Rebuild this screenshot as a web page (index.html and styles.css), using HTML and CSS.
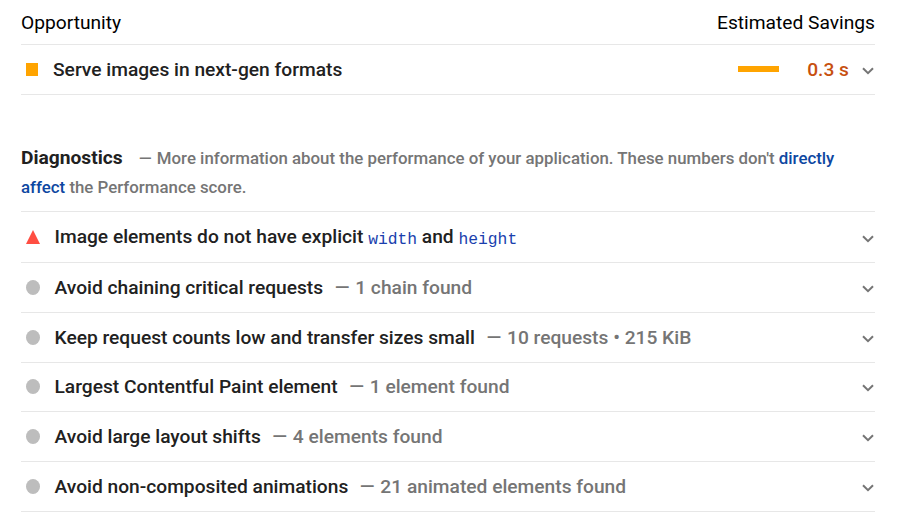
FILE: index.html
```html
<!DOCTYPE html>
<html lang="en">
<head>
<meta charset="utf-8">
<title>Performance audits</title>
<link rel="stylesheet" href="styles.css">
</head>
<body>
<main class="report">
  <header class="columns"><span>Opportunity</span><span>Estimated Savings</span></header>
  <div class="audit opportunity">
    <span class="icon"><i class="square"></i></span>
    <span class="title">Serve images in next-gen formats</span>
    <span class="bar"></span><span class="savings">0.3 s</span>
    <svg class="chevron" viewBox="0 0 12 8"><path d="M1 1.2 6 6.2 11 1.2"/></svg>
  </div>
  <section class="diagnostics">
    <p class="intro"><span class="heading">Diagnostics</span><span class="desc"><span class="dash">—</span> More information about the performance of your application. These numbers don't <a>directly<br>affect</a> the Performance score.</span></p>
    <div class="audit first">
      <span class="icon"><i class="triangle"></i></span>
      <span class="title">Image elements do not have explicit <code>width</code> and <code>height</code></span>
      <svg class="chevron" viewBox="0 0 12 8"><path d="M1 1.2 6 6.2 11 1.2"/></svg>
    </div>
    <div class="audit">
      <span class="icon"><i class="circle"></i></span>
      <span class="title">Avoid chaining critical requests</span><span class="detail"><span class="dash">—</span> 1 chain found</span>
      <svg class="chevron" viewBox="0 0 12 8"><path d="M1 1.2 6 6.2 11 1.2"/></svg>
    </div>
    <div class="audit">
      <span class="icon"><i class="circle"></i></span>
      <span class="title">Keep request counts low and transfer sizes small</span><span class="detail"><span class="dash">—</span> 10 requests • 215 KiB</span>
      <svg class="chevron" viewBox="0 0 12 8"><path d="M1 1.2 6 6.2 11 1.2"/></svg>
    </div>
    <div class="audit">
      <span class="icon"><i class="circle"></i></span>
      <span class="title">Largest Contentful Paint element</span><span class="detail"><span class="dash">—</span> 1 element found</span>
      <svg class="chevron" viewBox="0 0 12 8"><path d="M1 1.2 6 6.2 11 1.2"/></svg>
    </div>
    <div class="audit">
      <span class="icon"><i class="circle"></i></span>
      <span class="title">Avoid large layout shifts</span><span class="detail"><span class="dash">—</span> 4 elements found</span>
      <svg class="chevron" viewBox="0 0 12 8"><path d="M1 1.2 6 6.2 11 1.2"/></svg>
    </div>
    <div class="audit">
      <span class="icon"><i class="circle"></i></span>
      <span class="title">Avoid non-composited animations</span><span class="detail"><span class="dash">—</span> 21 animated elements found</span>
      <svg class="chevron" viewBox="0 0 12 8"><path d="M1 1.2 6 6.2 11 1.2"/></svg>
    </div>
  </section>
</main>
</body>
</html>
```
FILE: styles.css
```css
* { box-sizing: border-box; }
body { margin: 0; background: #fff; color: #212121; font-family: Roboto, sans-serif; }
.report { width: 854px; margin-left: 21px; }
.columns { display: flex; justify-content: space-between; align-items: center; height: 45px; border-bottom: 1px solid #e7e7e7; color: #000; font-size: 19.2px; }
.audit { display: flex; align-items: center; height: 49.8px; border-bottom: 1px solid #e7e7e7; font-size: 19.2px; font-weight: 500; white-space: nowrap; }
.opportunity { height: 50px; }
.first { height: 51px; }
.first .title { padding-bottom: 2px; }
.icon { display: flex; width: 33.5px; padding-left: 5px; }
.opportunity .icon { width: 32px; }
.square { width: 12px; height: 13px; background: #ffa400; }
.circle { width: 14px; height: 15px; border-radius: 50%; background: #bdbdbd; }
.triangle { width: 14px; height: 14px; background: #ff4e42; clip-path: polygon(50% 0, 100% 100%, 0 100%); }
.detail { margin-left: 11.5px; color: #757575; }
.dash { margin-right: 1px; }
.chevron { width: 12px; height: 8px; margin: 3px 1px 0 auto; fill: none; stroke: #757575; stroke-width: 2; }
.bar { width: 41px; height: 6px; margin: 0 0 2px auto; background: #ffa400; }
.savings { width: 70px; text-align: right; color: #c7500f; }
.opportunity .chevron { margin-left: 13px; }
.diagnostics { padding-top: 48px; }
.intro { height: 69px; margin: 0; border-bottom: 1px solid #e7e7e7; line-height: 29px; white-space: nowrap; }
.heading { margin-right: 16px; font-size: 19.2px; font-weight: 700; }
.desc { color: #757575; font-size: 16.85px; font-weight: 500; }
.desc a { color: #0d47a1; }
code { position: relative; top: 1px; color: #1a3fae; font-family: "Courier New", "Liberation Mono", monospace; font-size: 16.32px; font-weight: 400; }
```
